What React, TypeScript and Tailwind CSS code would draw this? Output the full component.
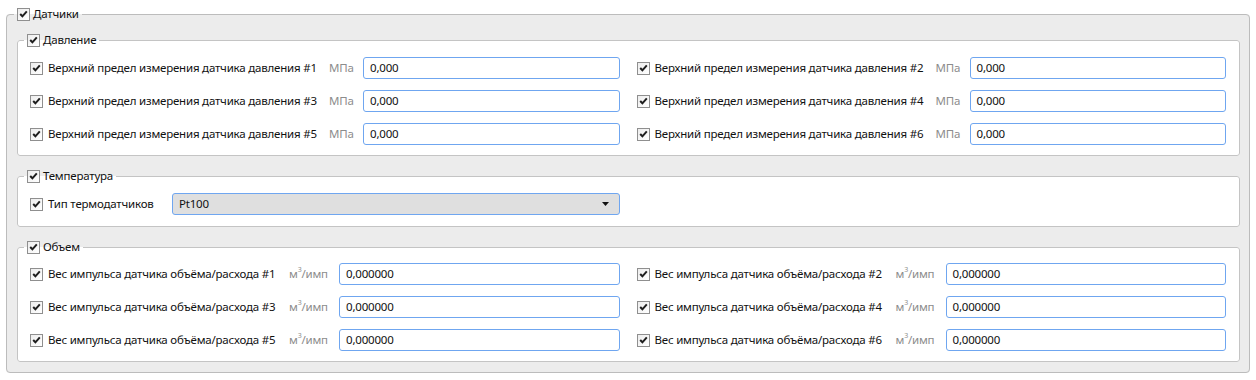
import React from "react";

const Check = () => (
  <span className="inline-flex h-[13px] w-[13px] shrink-0 items-center justify-center border border-[#8f8f8f] bg-gradient-to-br from-[#ededed] to-[#ffffff]">
    <svg width="9" height="8" viewBox="0 0 9 8">
      <path d="M1.2 4 L3.4 6.3 L7.8 1.4" stroke="#1e1e1e" strokeWidth="2" fill="none" />
    </svg>
  </span>
);

const Legend = ({ text, ml }: { text: string; ml: string }) => (
  <legend className={`${ml} px-[3px]`}>
    <div className="flex h-[16px] items-center gap-[3px]">
      <Check />
      <span className="leading-[16px]">{text}</span>
    </div>
  </legend>
);

const Input = ({ value }: { value: string }) => (
  <div className="flex h-[22px] flex-1 items-center rounded-[3px] border border-[#6fa6f0] bg-white px-[6px]">
    {value}
  </div>
);

const Row = ({
  label,
  unit,
  labelW,
  unitW,
  value,
}: {
  label: string;
  unit: React.ReactNode;
  labelW: string;
  unitW: string;
  value: string;
}) => (
  <div className="flex h-[22px] items-center">
    <div className={`flex items-center gap-[5px] ${labelW} shrink-0`}>
      <Check />
      <span className="whitespace-nowrap">{label}</span>
    </div>
    <span className={`${unitW} shrink-0 whitespace-nowrap text-[#8c8c8c]`}>{unit}</span>
    <Input value={value} />
  </div>
);

const M3 = () => (
  <span>
    м<sup className="top-[-0.9em] text-[7px]">3</sup>/имп
  </span>
);

export default function App() {
  const pressure = [1, 2, 3, 4, 5, 6];
  const volume = [1, 2, 3, 4, 5, 6];
  return (
    <div
      className="bg-white px-[6px] pt-[6px] text-[11.5px] leading-[16px] tracking-[-0.2px] text-[#111]"
      style={{ fontFamily: '"Noto Sans", "Open Sans", sans-serif' }}
    >
      <fieldset className="rounded-[4px] border border-[#bcbcbc] bg-[#ececec]">
        <Legend text="Датчики" ml="ml-[7px]" />
        <div className="flex flex-col gap-[12px] pb-[10px] pl-[10px] pr-[9px] pt-[10px]">
          <fieldset className="rounded-[3px] border border-[#c4c4c4] bg-white">
            <Legend text="Давление" ml="ml-[6px]" />
            <div className="grid grid-cols-2 gap-x-[17px] gap-y-[11px] pb-[10px] pl-[12px] pr-[13px] pt-[9px]">
              {pressure.map((n) => (
                <Row
                  key={n}
                  label={`Верхний предел измерения датчика давления #${n}`}
                  unit="МПа"
                  labelW="w-[299px]"
                  unitW="w-[34px]"
                  value="0,000"
                />
              ))}
            </div>
          </fieldset>
          <fieldset className="rounded-[3px] border border-[#c4c4c4] bg-white">
            <Legend text="Температура" ml="ml-[6px]" />
            <div className="grid grid-cols-2 gap-x-[17px] pb-[11px] pl-[12px] pr-[13px] pt-[9px]">
              <div className="flex h-[22px] items-center">
                <div className="flex w-[142px] shrink-0 items-center gap-[5px]">
                  <Check />
                  <span className="whitespace-nowrap">Тип термодатчиков</span>
                </div>
                <div className="flex h-[22px] flex-1 items-center justify-between rounded-[3px] border border-[#6fa6f0] bg-[#dfdfdf] pl-[6px] pr-[10px]">
                  <span>Pt100</span>
                  <svg width="7" height="4" viewBox="0 0 7 4">
                    <path d="M0 0 H7 L3.5 4 Z" fill="#111" />
                  </svg>
                </div>
              </div>
              <div />
            </div>
          </fieldset>
          <fieldset className="rounded-[3px] border border-[#c4c4c4] bg-white">
            <Legend text="Объем" ml="ml-[6px]" />
            <div className="grid grid-cols-2 gap-x-[17px] gap-y-[11px] pb-[10px] pl-[12px] pr-[13px] pt-[8px]">
              {volume.map((n) => (
                <Row
                  key={n}
                  label={`Вес импульса датчика объёма/расхода #${n}`}
                  unit={<M3 />}
                  labelW="w-[259px]"
                  unitW="w-[50px]"
                  value="0,000000"
                />
              ))}
            </div>
          </fieldset>
        </div>
      </fieldset>
    </div>
  );
}
